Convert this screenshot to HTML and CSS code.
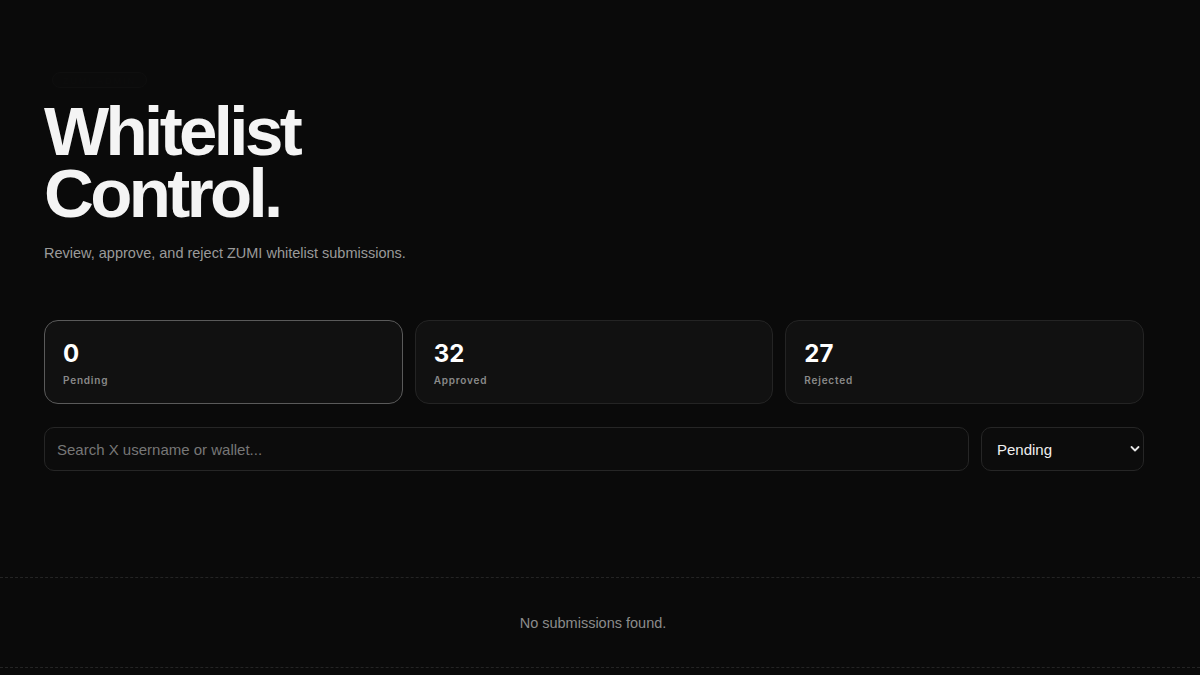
FILE: index.html
```html
<!DOCTYPE html>
<html lang="en">
<head>
<meta charset="utf-8">
<title>Whitelist Control</title>
<link rel="stylesheet" href="styles.css">
</head>
<body>
<main class="page">
  <header class="hero">
    <div class="badge">ZUMI ADMIN</div>
    <h1 class="title"><span class="title-line">Whitelist</span><span class="title-line">Control.</span></h1>
    <p class="subtitle">Review, approve, and reject ZUMI whitelist submissions.</p>
  </header>

  <section class="stats">
    <div class="stat active">
      <div class="stat-num">0</div>
      <div class="stat-label">Pending</div>
    </div>
    <div class="stat">
      <div class="stat-num">32</div>
      <div class="stat-label">Approved</div>
    </div>
    <div class="stat">
      <div class="stat-num">27</div>
      <div class="stat-label">Rejected</div>
    </div>
  </section>

  <section class="filters">
    <input class="search" type="text" placeholder="Search X username or wallet...">
    <div class="select-wrap">
      <span class="select-value">Pending</span>
      <svg class="chev" width="10" height="8" viewBox="0 0 10 8"><path d="M1.5 2 L5 5.5 L8.5 2" fill="none" stroke="#e6e6e6" stroke-width="1.8" stroke-linecap="round" stroke-linejoin="round"/></svg>
    </div>
  </section>
</main>

<section class="results">
  <p class="empty">No submissions found.</p>
</section>
</body>
</html>
```

FILE: styles.css
```css
* { box-sizing: border-box; }

html, body {
  margin: 0;
  padding: 0;
  background: #0a0a0a;
  color: #f2f2f2;
  font-family: "Liberation Sans", Arial, sans-serif;
  height: 675px;
  overflow: hidden;
}

.page {
  width: 1100px;
  margin: 0 0 0 44px;
  padding-top: 72px;
}

.hero {
  display: flex;
  flex-direction: column;
  align-items: flex-start;
}

.badge {
  height: 16px;
  padding: 0 10px;
  margin-left: 8px;
  font-size: 9px;
  line-height: 16px;
  letter-spacing: 2px;
  color: #0d0d0d;
  border: 1px solid #0f0f0f;
  border-radius: 8px;
  background: #0b0b0b;
}

.title {
  margin: 13px 0 0;
  font-size: 69px;
  font-weight: 700;
  letter-spacing: -3.6px;
  color: #f4f4f4;
  display: flex;
  flex-direction: column;
}

.title-line {
  display: block;
  height: 62px;
  line-height: 62px;
}

.subtitle {
  margin: 18px 0 0;
  font-size: 14.5px;
  line-height: 20px;
  color: #9a9a9a;
}

.stats {
  margin-top: 57px;
  display: grid;
  grid-template-columns: repeat(3, 1fr);
  gap: 12px;
}

.stat {
  height: 84px;
  padding: 18px 18px;
  background: #111111;
  border: 1px solid #242424;
  border-radius: 14px;
}

.stat.active {
  border-color: #5a5a5a;
}

.stat-num {
  font-family: Inter, "Liberation Sans", sans-serif;
  font-size: 24px;
  font-weight: 700;
  line-height: 30px;
  color: #ffffff;
}

.stat-label {
  margin-top: 5px;
  font-family: Inter, "Liberation Sans", sans-serif;
  font-size: 10px;
  font-weight: 600;
  letter-spacing: 0.8px;
  color: #8a8a8a;
}

.filters {
  margin-top: 23px;
  display: flex;
  gap: 12px;
}

.search {
  flex: 1;
  height: 44px;
  padding: 0 12px;
  background: #0c0c0c;
  border: 1px solid #262626;
  border-radius: 10px;
  font-family: "Liberation Sans", Arial, sans-serif;
  font-size: 15px;
  color: #eeeeee;
  outline: none;
}

.search::placeholder {
  color: #777777;
}

.select-wrap {
  width: 163px;
  height: 44px;
  padding: 0 3px 0 15px;
  display: flex;
  align-items: center;
  justify-content: space-between;
  background: #0c0c0c;
  border: 1px solid #262626;
  border-radius: 10px;
}

.select-value {
  font-size: 15px;
  color: #f0f0f0;
}

.results {
  margin-top: 106px;
  height: 91px;
  padding-right: 14px;
  border-top: 1px dashed #242424;
  border-bottom: 1px dashed #242424;
  display: flex;
  align-items: center;
  justify-content: center;
}

.empty {
  margin: 0;
  font-size: 14.5px;
  color: #8c8c8c;
}
```
